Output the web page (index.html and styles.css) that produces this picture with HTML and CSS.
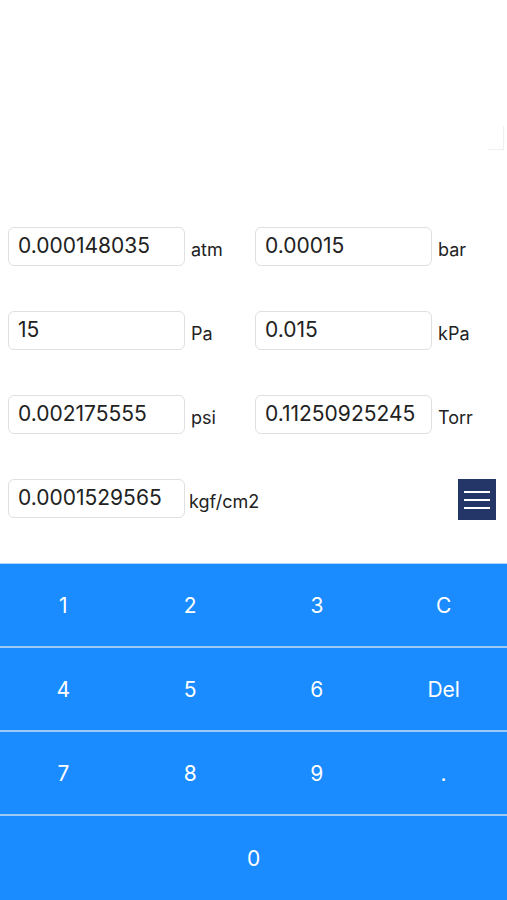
FILE: index.html
```html
<!DOCTYPE html>
<html>
<head>
	<title>Pressure Converter</title>
	<meta charset="UTF-8">
	<meta name="viewport" content="width=device-width, initial-scale=1.0">
	<link rel="stylesheet" href="styles.css">
</head>
<body>
	<div class="top">
		<div class="ghost"></div>
	</div>

	<div class="units">
		<div class="row">
			<div class="cell">
				<input type="text" class="field" value="0.000148035" readonly>
				<span class="unit">atm</span>
			</div>
			<div class="cell">
				<input type="text" class="field" value="0.00015" readonly>
				<span class="unit">bar</span>
			</div>
		</div>
		<div class="row">
			<div class="cell">
				<input type="text" class="field" value="15" readonly>
				<span class="unit">Pa</span>
			</div>
			<div class="cell">
				<input type="text" class="field" value="0.015" readonly>
				<span class="unit">kPa</span>
			</div>
		</div>
		<div class="row">
			<div class="cell">
				<input type="text" class="field" value="0.002175555" readonly>
				<span class="unit">psi</span>
			</div>
			<div class="cell">
				<input type="text" class="field" value="0.11250925245" readonly>
				<span class="unit">Torr</span>
			</div>
		</div>
		<div class="row">
			<div class="cell">
				<input type="text" class="field" value="0.0001529565" readonly>
				<span class="unit unit-wide">kgf/cm2</span>
			</div>
			<div class="cell cell-menu">
				<button type="button" class="menu" aria-label="Menu">
					<span class="bar"></span>
					<span class="bar"></span>
					<span class="bar"></span>
				</button>
			</div>
		</div>
	</div>

	<div class="keypad">
		<button type="button" class="key">1</button>
		<button type="button" class="key">2</button>
		<button type="button" class="key">3</button>
		<button type="button" class="key">C</button>
		<button type="button" class="key">4</button>
		<button type="button" class="key">5</button>
		<button type="button" class="key">6</button>
		<button type="button" class="key">Del</button>
		<button type="button" class="key">7</button>
		<button type="button" class="key">8</button>
		<button type="button" class="key">9</button>
		<button type="button" class="key">.</button>
		<button type="button" class="key key-zero">0</button>
	</div>
</body>
</html>
```

FILE: styles.css
```css
body {
	margin: 0;
	background-color: #fff;
	font-family: Inter, "Liberation Sans", Arial, sans-serif;
	color: #222;
}

.top {
	height: 227px;
	display: flex;
	justify-content: flex-end;
	align-items: flex-start;
}

.ghost {
	width: 16px;
	height: 24px;
	margin-top: 125px;
	margin-right: 4px;
	box-shadow: 1px 1px 1px rgba(0, 0, 0, 0.06);
}

.units {
	padding: 0 0 45px 8px;
	display: flex;
	flex-direction: column;
	gap: 45px;
}

.row {
	display: flex;
	height: 39px;
}

.cell {
	width: 247px;
	display: flex;
	align-items: center;
}

.field {
	width: 177px;
	height: 39px;
	box-sizing: border-box;
	padding: 0 6px 3px 9px;
	border: 1px solid #e0e0e0;
	border-radius: 6px;
	font-family: Inter, "Liberation Sans", Arial, sans-serif;
	font-size: 21px;
	color: #222;
	outline: none;
}

.unit {
	margin-left: 6px;
	padding-top: 6px;
	font-size: 18px;
	color: #222;
}

.unit-wide {
	margin-left: 4px;
}

.cell-menu {
	justify-content: flex-end;
	padding-right: 6px;
	box-sizing: border-box;
}

.menu {
	width: 38px;
	height: 41px;
	margin-top: 2px;
	padding: 0;
	border: none;
	background-color: #243667;
	display: flex;
	flex-direction: column;
	justify-content: center;
	align-items: center;
	gap: 6px;
	cursor: pointer;
}

.bar {
	display: block;
	width: 26px;
	height: 2px;
	background-color: #fff;
}

.keypad {
	display: grid;
	grid-template-columns: repeat(4, 1fr);
	background-color: #1a8cff;
	border-top: 1px solid #b0d5fa;
}

.key {
	height: 84px;
	border: none;
	border-bottom: 2px solid #9ccbf7;
	background-color: #1a8cff;
	color: #fff;
	font-family: Inter, "Liberation Sans", Arial, sans-serif;
	font-size: 21px;
	padding: 0;
	cursor: pointer;
}

.key-zero {
	grid-column: span 4;
	border-bottom: none;
}
```
